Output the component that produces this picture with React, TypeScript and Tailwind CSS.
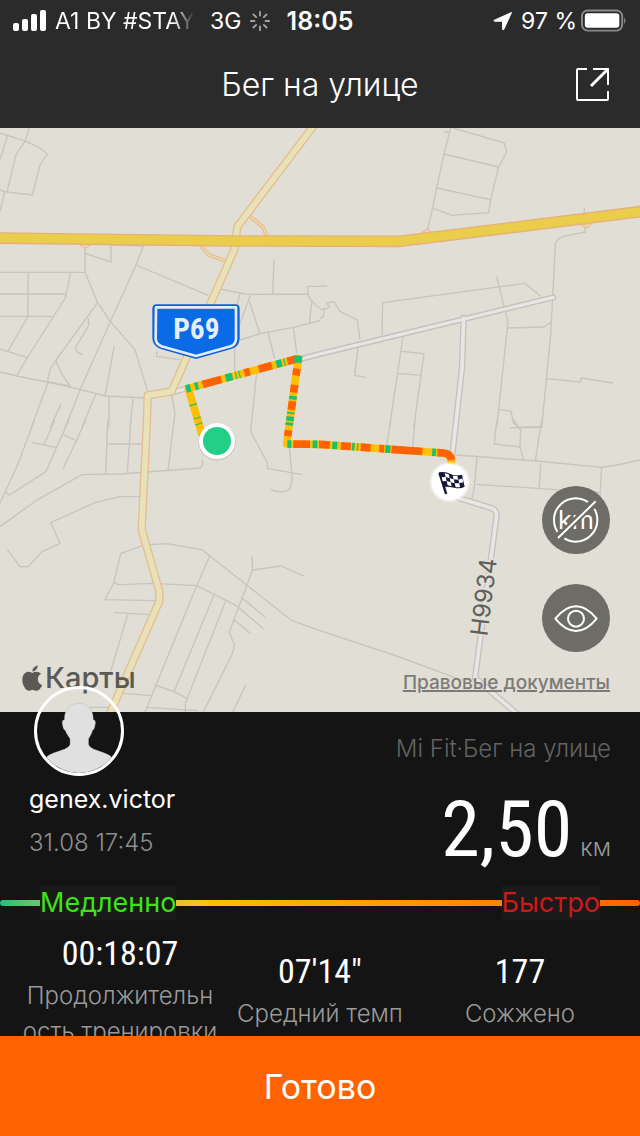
import { Loader } from "lucide-react";

type Leg = { x1: number; y1: number; x2: number; y2: number };
type Pace = "slow" | "mid" | "fast";

const PACE_COLORS: Record<Pace, string> = {
  slow: "#14c276",
  mid: "#ffbf04",
  fast: "#ff6204",
};

const LEGS: Record<string, Leg> = {
  a: { x1: 605, y1: 916, x2: 565, y2: 781 },
  b: { x1: 565, y1: 781, x2: 895, y2: 691 },
  c: { x1: 895, y1: 691, x2: 860, y2: 948 },
  d: { x1: 860, y1: 948, x2: 960, y2: 949 },
  e: { x1: 960, y1: 949, x2: 1330, y2: 975 },
};

// [leg, from, to, pace], from and to are shares of the leg
const SEGMENTS: [string, number, number, Pace][] = [
  ["a", 0.2, 0.22, "slow"],
  ["a", 0.33, 0.35, "slow"],
  ["a", 0.62, 0.65, "slow"],
  ["b", -0.02, 0.02, "slow"],
  ["b", 0.06, 0.09, "slow"],
  ["b", 0.13, 0.3, "fast"],
  ["b", 0.34, 0.4, "slow"],
  ["b", 0.43, 0.44, "slow"],
  ["b", 0.46, 0.47, "slow"],
  ["b", 0.51, 0.56, "fast"],
  ["b", 0.64, 0.76, "fast"],
  ["b", 0.8, 0.85, "slow"],
  ["b", 0.87, 0.88, "slow"],
  ["b", 0.9, 0.98, "fast"],
  ["c", -0.03, 0.05, "slow"],
  ["c", 0.12, 0.2, "fast"],
  ["c", 0.31, 0.4, "fast"],
  ["c", 0.44, 0.48, "slow"],
  ["c", 0.5, 0.6, "fast"],
  ["c", 0.63, 0.65, "slow"],
  ["c", 0.68, 0.73, "slow"],
  ["c", 0.75, 0.78, "slow"],
  ["c", 0.84, 0.91, "fast"],
  ["d", 0.02, 0.14, "slow"],
  ["d", 0.2, 0.7, "fast"],
  ["d", 0.78, 0.92, "slow"],
  ["d", 0.97, 1, "fast"],
  ["e", 0, 0.08, "fast"],
  ["e", 0.1, 0.14, "slow"],
  ["e", 0.17, 0.25, "fast"],
  ["e", 0.26, 0.28, "slow"],
  ["e", 0.3, 0.31, "slow"],
  ["e", 0.33, 0.41, "fast"],
  ["e", 0.48, 0.52, "fast"],
  ["e", 0.53, 0.57, "slow"],
  ["e", 0.58, 0.83, "fast"],
  ["e", 0.91, 0.94, "slow"],
];

const STATS = [
  { value: "00:18:07", label: "Продолжительность тренировки" },
  { value: "07'14\"", label: "Средний темп" },
  { value: "177", label: "Сожжено" },
];

function Streets() {
  return (
    <g fill="none" stroke="#c6c5be" strokeWidth="4" strokeLinejoin="round">
      <path d="M0 15L78 40L120 60L142 78L120 112L97 201L14 191L0 186M88 0L75 40L48 80L21 192M22 25L0 95M14 191L0 250" />
      <path d="M255 355V433L293 524L331 581L405 665L443 790M255 376L333 402V351L430 354L408 411L331 581L240 786M408 411L625 502M0 433H257M0 498H196M85 433L83 567L24 669M0 565H163M212 433L196 510L83 687L50 744M0 663L82 689M293 524L168 696Q180 735 210 774L145 762L93 900M168 696L150 725L142 762M265 570L266 592L226 660Q230 676 248 679M0 732L50 744L142 762L240 784L315 804L440 810M343 652L315 804M183 828L150 900M240 786L195 900M288 797L245 900M327 806V900M399 812L390 900" />
      <path d="M656 482L720 495L740 499L925 498L922 475H960M922 498Q935 525 960 540M936 515L928 588M822 394L818 498M720 495L695 600M752 500L700 640M748 520L780 617M720 636L780 617L880 598L960 578M804 615L824 690M880 598L890 675M704 645V735M470 670V685L540 695M770 735L752 910L802 1005V1021L907 1040M515 800L525 855L504 1026" />
      <g transform="translate(960 0)">
        <path d="M372 12L390 14M392 0L372 78L350 180L338 240L320 315M400 0L553 45L560 72L536 117L372 78M536 117L512 215L350 180M512 215L506 254L395 262L338 240M793 240V285L796 312L730 325Q706 336 706 350L698 508L692 620L665 900M186 620L188 524L614 466L664 506M530 445L552 535L564 580L530 900M564 600L671 597L694 582M0 474H22M0 545L12 542L10 565L0 572M12 545L28 537L20 525L42 521L60 550L112 576L120 635M114 655L104 742L138 748M249 625L208 900M245 670L312 677L281 900M234 736L306 742M680 752L780 762L784 750L878 765M536 844L573 850L580 884L595 898L665 895" />
      </g>
      <g transform="translate(0 876)">
        <path d="M103 0L55 130L0 250M165 0L133 72M97 67L169 83M207 0L169 83L138 155L28 225L17 218M257 0L229 62L190 44M229 62L190 145M0 320L108 242L246 164L360 162L600 144Q608 140 608 120M323 0L317 163M393 0L382 157M323 72H427M22 388L60 440H85L126 395L180 370L152 308L285 248L360 230H420" />
        <path d="M342 486L362 401L430 375L500 371L606 389L740 495L876 602L960 632M342 486Q350 495 362 494L458 490L590 497L709 557L790 626M342 486L315 539L466 542M342 577L448 584M383 584L330 760M629 409L590 497L435 876M641 527L523 813M676 545L556 850V876M743 490L688 637L703 674Q700 700 690 715L610 876M757 408V450L743 490M757 450L843 438L914 469M723 532L795 591M700 598L752 641M464 795L523 815L560 835M370 820L452 827M270 862H340M438 862L595 872M738 794L698 876M868 80L875 155Q880 190 866 210Q845 222 812 208" />
      </g>
      <g transform="translate(960 876)">
        <path d="M213 0L200 75M285 0L278 85M410 105L650 123L845 142Q870 140 960 120M471 112L462 210L455 238M662 130L658 204M470 193L840 218M845 142L838 260M665 0L646 123M530 0L523 72L600 81L611 120M580 0L602 30L600 81M570 23H663M0 632L230 708L430 782" />
      </g>
    </g>
  );
}

function Roads() {
  const local = "M1391 570L1386 720L1366 900L1357 980M1375 1110L1474 1140Q1490 1146 1490 1162L1425 1650L1560 1765";
  const lane = "M515 793L960 678L1660 508";
  const p69 = "M940 -5L712 296L703 365L515 790L443 802L440 900L425 1204L478 1390V1420L330 1756";
  const ramps = "M750 265L790 298L800 325M600 350L628 382L675 398M245 350L256 356L266 350M1270 316L1281 308L1290 314M1750 290L1760 296L1768 288";
  const highway = "M-10 330L710 339L1200 340L1930 250";
  return (
    <g fill="none" strokeLinejoin="round" strokeLinecap="round">
      <path d={local} stroke="#c3c2bd" strokeWidth="19" />
      <path d={lane} stroke="#c3c2bd" strokeWidth="18" />
      <path d={local} stroke="#e8e6e4" strokeWidth="11" />
      <path d={lane} stroke="#e8e6e4" strokeWidth="10" />
      <path d={ramps} stroke="#e8b987" strokeWidth="11" />
      <path d={ramps} stroke="#eadab0" strokeWidth="5" />
      <path d={p69} stroke="#e6bd92" strokeWidth="25" />
      <path d={p69} stroke="#e8e2b8" strokeWidth="17" />
      <path d={highway} stroke="#e6b07a" strokeWidth="35" />
      <path d={highway} stroke="#e9cd4b" strokeWidth="27" />
    </g>
  );
}

function Route() {
  return (
    <g fill="none" strokeWidth="23">
      <path
        d="M605 916L565 781L895 691L860 948L960 949L1330 975Q1355 978 1355 1010"
        stroke={PACE_COLORS.mid}
        strokeLinejoin="round"
        strokeLinecap="round"
      />
      {SEGMENTS.map(([leg, from, to, pace], i) => {
        const { x1, y1, x2, y2 } = LEGS[leg];
        return (
          <line
            key={i}
            x1={x1 + (x2 - x1) * from}
            y1={y1 + (y2 - y1) * from}
            x2={x1 + (x2 - x1) * to}
            y2={y1 + (y2 - y1) * to}
            stroke={PACE_COLORS[pace]}
          />
        );
      })}
      <path d="M1312 974L1330 975Q1353 977 1355 996" stroke={PACE_COLORS.fast} />
    </g>
  );
}

function FinishFlag() {
  return (
    <g>
      <circle cx="1349" cy="1062" r="60" fill="#ffffff" opacity="0.5" />
      <circle cx="1349" cy="1062" r="54" fill="#ffffff" />
      <g transform="translate(960 876)" fill="#17173a">
        <path d="M355 160L362 157L382 221L375 223Z" />
        <path d="M357 157Q376 153 390 161T426 164L434 200Q420 208 402 203T369 201Z" />
        <g fill="#ffffff">
          <path d="M374 160L386 163L389 175L377 171Z" />
          <path d="M398 167L412 167L415 179L401 178Z" />
          <path d="M365 172L377 171L380 183L368 184Z" />
          <path d="M389 175L401 178L404 190L392 187Z" />
          <path d="M415 179L427 175L430 187L418 190Z" />
          <path d="M380 183L392 187L395 199L383 196Z" />
          <path d="M404 190L418 190L420 202L407 202Z" />
        </g>
      </g>
    </g>
  );
}

function WorkoutMap() {
  return (
    <svg
      viewBox="0 0 1920 1752"
      preserveAspectRatio="xMidYMid slice"
      className="absolute inset-0 h-full w-full"
      role="img"
      aria-label="Маршрут"
    >
      <Streets />
      <Roads />
      <path
        d="M470 529H706Q719 529 719 542V630Q719 655 696 662L588 693L480 662Q457 652 457 630V542Q457 529 470 529Z"
        fill="#1160dc"
      />
      <path
        d="M468 538H708V634Q706 650 692 655L588 684L484 655Q468 648 467 632Z"
        fill="#0b6ae6"
        stroke="#e4ecf8"
        strokeWidth="8"
        strokeLinejoin="round"
      />
      <text
        x="589"
        y="632"
        textAnchor="middle"
        fill="#e6eefb"
        className="font-['Roboto_Condensed',Roboto,sans-serif] text-[88px] font-bold"
      >
        P69
      </text>
      <text
        x="0"
        y="0"
        transform="translate(1462 1526) rotate(-83)"
        fill="#5f5f5c"
        stroke="#e1ded6"
        strokeWidth="10"
        paintOrder="stroke"
        className="font-[Inter,sans-serif] text-[72px]"
      >
        H9934
      </text>
      <Route />
      <circle cx="651" cy="941" r="57" fill="#000000" opacity="0.08" />
      <circle cx="651" cy="939" r="54" fill="#ffffff" />
      <circle cx="651" cy="939" r="42" fill="#21cf87" />
      <FinishFlag />
    </svg>
  );
}

function StatusBar() {
  return (
    <div className="grid h-[42px] grid-cols-[1fr_auto_1fr] items-center px-[13px] text-[23px] leading-none">
      <div className="flex items-center">
        <svg viewBox="0 0 34 22" className="h-[22px] w-[34px]" fill="#ffffff">
          <rect x="0" y="13" width="6" height="8" rx="2" />
          <rect x="9" y="9" width="6" height="12" rx="2" />
          <rect x="18" y="4" width="6" height="17" rx="2" />
          <rect x="27" y="0" width="6" height="21" rx="2" />
        </svg>
        <span className="ml-2 w-[139px] overflow-hidden whitespace-nowrap bg-linear-to-r from-white from-85% to-transparent bg-clip-text leading-[30px] text-transparent">
          A1 BY #STAY
        </span>
        <span className="ml-4">3G</span>
        <Loader size={22} strokeWidth={2} className="ml-2 text-[#a5a5a5]" />
      </div>
      <span className="text-[25px] font-semibold">18:05</span>
      <div className="flex items-center justify-end">
        <svg viewBox="0 0 20 20" className="h-5 w-5" fill="#ffffff">
          <path d="M18.5 1.5L1 9.4Q.4 10 1.4 10.2H9.6V18.2Q10 19.6 10.8 18.4Z" stroke="#ffffff" strokeLinejoin="round" />
        </svg>
        <span className="ml-2">97 %</span>
        <svg viewBox="0 0 48 24" className="ml-1 h-6 w-[46px]">
          <rect x="1" y="1" width="42" height="21" rx="6" fill="none" stroke="#8a8a8a" strokeWidth="2" />
          <rect x="4" y="4" width="36" height="15" rx="3" fill="#ffffff" />
          <path d="M45 8Q48 11.500 45 15Z" fill="#8a8a8a" />
        </svg>
      </div>
    </div>
  );
}

function Avatar() {
  return (
    <div className="absolute -top-[26px] left-[34px] h-[90px] w-[90px] overflow-hidden rounded-full border-[3px] border-white">
      <svg viewBox="105 51 264 264" className="h-full w-full" fill="#e0e0e0">
        <path
          d="M236 96C265 96 282 115 282 148Q291 148 288 162Q285 181 280 180C277 193 269 203 267 208V225C271 243 311 246 337 262L369 330H105L137 262C163 246 204 243 209 225V208C207 203 198 193 193 180Q188 181 185 162Q182 148 191 148C191 115 208 96 236 96Z"
          stroke="#a8a8a8"
        />
      </svg>
    </div>
  );
}

export default function App() {
  return (
    <div className="flex h-dvh flex-col overflow-hidden bg-[#141414] font-[Inter,'Noto_Sans',sans-serif] text-white">
      <header className="shrink-0 bg-[#2b2b2b]">
        <StatusBar />
        <div className="grid h-[86px] grid-cols-[1fr_auto_1fr] items-center px-[30px]">
          <h1 className="col-start-2 text-[32px] leading-[40px] font-light">Бег на улице</h1>
          <button type="button" aria-label="Поделиться" className="justify-self-end">
            <svg viewBox="0 0 34 34" className="h-[34px] w-[34px]" fill="none" stroke="#ffffff" strokeWidth="2">
              <path d="M11 1H2Q1 1 1 2V31Q1 32 2 32H31Q32 32 32 31V23" />
              <path d="M17 1H32V17" />
              <path d="M31 2L15 18" strokeWidth="3" />
            </svg>
          </button>
        </div>
      </header>

      <section className="relative min-h-0 flex-1 bg-[#e1ded6]">
        <WorkoutMap />
        <div className="absolute right-[30px] bottom-[60px] flex flex-col gap-[30px]">
          <button type="button" aria-label="Скрыть километры" className="h-[68px] w-[68px] rounded-full bg-[#6d6c67]">
            <svg viewBox="0 0 204 204" className="h-full w-full" fill="none" stroke="#ffffff" strokeWidth="6">
              <circle cx="101" cy="102" r="65" />
              <path d="M40 164L168 38" stroke="#6d6c67" strokeWidth="28" />
              <text
                x="102"
                y="130"
                textAnchor="middle"
                fill="#ffffff"
                stroke="none"
                className="font-[Inter,sans-serif] text-[76px]"
              >
                km
              </text>
              <path d="M52 152L157 48" stroke="#6d6c67" strokeWidth="20" />
              <path d="M48 156L161 46" />
            </svg>
          </button>
          <button type="button" aria-label="Показать карту" className="h-[68px] w-[68px] rounded-full bg-[#6d6c67]">
            <svg viewBox="0 0 204 204" className="h-full w-full" fill="none" stroke="#ffffff" strokeWidth="6">
              <path d="M40 104Q70 67 102 67T164 104Q134 141 102 141T40 104Z" strokeLinejoin="round" />
              <circle cx="102" cy="104" r="24" />
            </svg>
          </button>
        </div>
        <div className="absolute bottom-[14px] left-[22px] flex items-center text-[#5a5955]">
          <svg viewBox="65 734 62 78" className="h-[26px] w-[21px]" fill="currentColor">
            <path d="M96 754Q94 742 111 735Q113 748 96 754ZM122 760Q111 766 112 778Q113 790 125 794Q119 811 108 811Q102 811 96 808Q89 811 84 811Q73 808 67 790Q62 768 74 758Q84 751 95 758Q110 749 122 760Z" />
          </svg>
          <span className="ml-[2px] text-[29px] leading-[40px] font-medium">Карты</span>
        </div>
        <a href="#legal" className="absolute right-[30px] bottom-[16px] text-[19px] leading-[26px] font-medium text-[#7d7b77] underline decoration-2">
          Правовые документы
        </a>
      </section>

      <section className="relative flex h-[324px] shrink-0 flex-col bg-[#141414]">
        <Avatar />
        <div className="flex h-[174px] shrink-0 justify-between px-[29px]">
          <div className="pt-[72px]">
            <p className="text-[25px] leading-[30px]">genex.victor</p>
            <p className="mt-[14px] text-[24px] leading-[30px] font-light text-[#8e8e8e]">31.08 17:45</p>
          </div>
          <div className="flex flex-col items-end pt-[22px]">
            <p className="text-[24px] leading-[30px] font-light text-[#626262]">Mi Fit·Бег на улице</p>
            <p className="mt-[22px] flex items-baseline leading-[88px]">
              <span className="font-['Roboto_Condensed','Liberation_Sans_Narrow',sans-serif] text-[78px]">2,50</span>
              <span className="ml-2 text-[24px] font-light text-[#9a9a9a]">км</span>
            </p>
          </div>
        </div>

        <div className="relative flex h-[34px] shrink-0 items-center justify-between px-[40px] text-[27px] leading-[34px]">
          <div className="absolute inset-x-0 top-[14px] h-[6px] rounded-full bg-linear-to-r from-[#14c276] via-[#ffc000] via-33% to-[#ff6000]" />
          <span className="relative bg-[#1a1a1a] text-[#3ee315]">Медленно</span>
          <span className="relative bg-[#1a1a1a] text-[#d01818]">Быстро</span>
        </div>

        <div className="min-h-0 flex-1 overflow-hidden">
          <dl className="grid grid-cols-3 items-center px-[20px] pt-[8px]">
            {STATS.map((stat) => (
              <div key={stat.label} className="flex flex-col-reverse text-center">
                <dt className="text-[24px] leading-[36px] font-light break-all text-[#9a9a9a]">{stat.label}</dt>
                <dd className="font-['Roboto_Condensed','Liberation_Sans_Narrow',sans-serif] text-[34px] leading-[50px]">
                  {stat.value}
                </dd>
              </div>
            ))}
          </dl>
        </div>
      </section>

      <button type="button" className="h-[100px] shrink-0 bg-[#ff6200] text-[34px]">
        Готово
      </button>
    </div>
  );
}
